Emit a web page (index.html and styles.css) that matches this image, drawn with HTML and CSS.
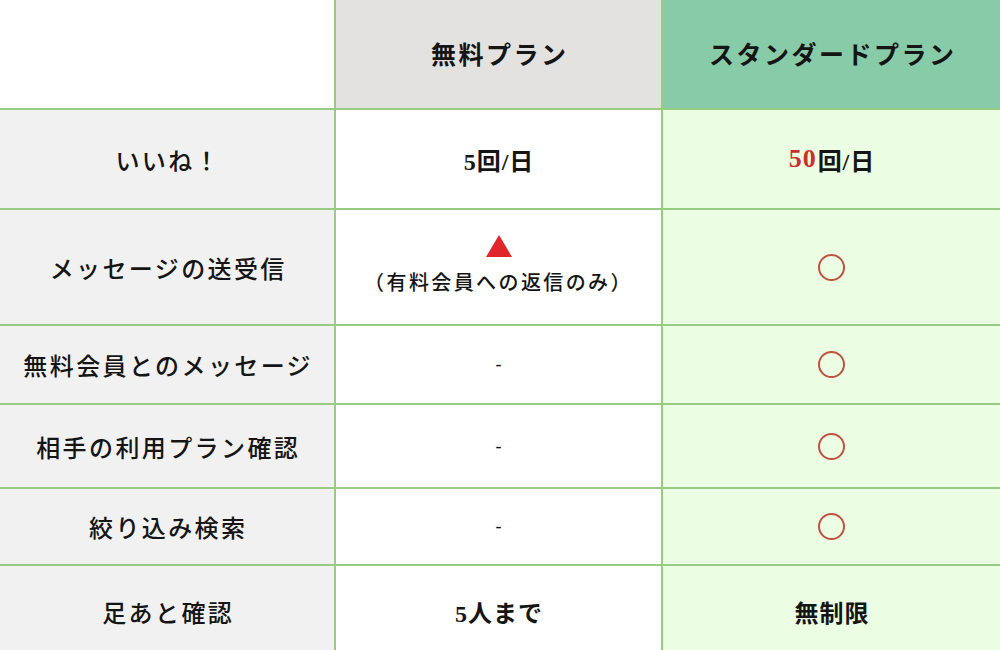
FILE: index.html
```html
<!DOCTYPE html>
<html lang="ja">
<head>
<meta charset="utf-8">
<title>プラン比較</title>
<link rel="stylesheet" href="styles.css">
</head>
<body>
<div class="table">
  <div class="cell head-blank"></div>
  <div class="cell head-free">無料プラン</div>
  <div class="cell head-std">スタンダードプラン</div>

  <div class="cell label">いいね！</div>
  <div class="cell free strong">5回/日</div>
  <div class="cell std strong"><span class="red">50</span>回/日</div>

  <div class="cell label">メッセージの送受信</div>
  <div class="cell free stack">
    <svg class="tri" width="28" height="24" viewBox="0 0 28 24"><polygon points="14,1 27,23 1,23" fill="#e0262a"/></svg>
    <span class="note">（有料会員への返信のみ）</span>
  </div>
  <div class="cell std"><span class="circle"></span></div>

  <div class="cell label">無料会員とのメッセージ</div>
  <div class="cell free dash">-</div>
  <div class="cell std"><span class="circle"></span></div>

  <div class="cell label">相手の利用プラン確認</div>
  <div class="cell free dash">-</div>
  <div class="cell std"><span class="circle"></span></div>

  <div class="cell label">絞り込み検索</div>
  <div class="cell free dash">-</div>
  <div class="cell std"><span class="circle"></span></div>

  <div class="cell label">足あと確認</div>
  <div class="cell free strong">5人まで</div>
  <div class="cell std strong">無制限</div>
</div>
</body>
</html>
```

FILE: styles.css
```css
html, body {
  margin: 0;
  padding: 0;
  background: #ffffff;
}

body {
  font-family: "Liberation Serif", "Noto Sans CJK JP", serif;
  color: #151515;
}

.table {
  display: grid;
  grid-template-columns: 334px 325px 1fr;
  grid-template-rows: 108px 98px 114px 77px 82px 75px 90px;
  gap: 2px;
  background: #98cc82;
  width: 1000px;
  height: 650px;
  overflow: hidden;
}

.cell {
  display: flex;
  align-items: center;
  justify-content: center;
  font-size: 24px;
  font-weight: 500;
  letter-spacing: 0.1em;
  text-indent: 0.1em;
}

.head-blank {
  background: #ffffff;
}

.head-free {
  background: #e3e2e0;
  font-size: 25px;
  font-weight: 700;
  padding-bottom: 2px;
}

.head-std {
  background: #88cba9;
  font-size: 25px;
  font-weight: 700;
  padding-bottom: 2px;
}

.label {
  background: #f1f1f1;
}

.free {
  background: #ffffff;
}

.std {
  background: #ebfde3;
}

.strong {
  font-size: 24px;
  font-weight: 700;
  letter-spacing: 0.04em;
  text-indent: 0.04em;
}

.red {
  color: #c8302a;
  font-size: 26px;
}

.strong:not(.std) {
  font-size: 24px;
}

.stack {
  flex-direction: column;
  gap: 9px;
  padding-bottom: 4px;
}

.tri {
  display: block;
}

.note {
  font-size: 20px;
  letter-spacing: 0.12em;
  text-indent: 0;
}

.dash {
  font-size: 18px;
  font-weight: 400;
}

.circle {
  display: block;
  width: 23px;
  height: 23px;
  border: 2px solid #c0513f;
  border-radius: 50%;
}
```
